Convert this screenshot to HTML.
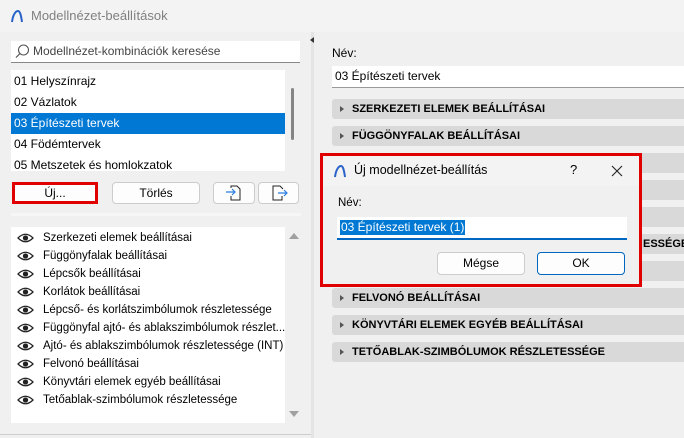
<!DOCTYPE html>
<html><head><meta charset="utf-8"><style>
*{box-sizing:border-box;margin:0;padding:0}
body{width:684px;height:438px;overflow:hidden;background:#f0f0f0;font-family:"Segoe UI","Liberation Sans",sans-serif;font-size:12px;color:#000;position:relative}
.a{position:absolute}
.title{left:0;top:0;width:684px;height:32px;background:#f3f3f3;color:#808080;font-size:13px}
.box{background:#fff}
.row{position:absolute;left:0;height:21px;line-height:21px;padding-left:3px;width:274px}
.btn{position:absolute;background:#fdfdfd;border:1px solid #ccc;border-radius:4px;text-align:center;line-height:20px}
.eye{position:absolute;left:5px;height:18px;line-height:18px;font-size:11.5px;white-space:nowrap}
.eye svg{vertical-align:middle;margin-right:9px;margin-left:1px}
.bar{position:absolute;left:332px;width:352px;height:20px;background:#d9d9d9;border-radius:3px 0 0 3px;font-weight:bold;font-size:11px;line-height:20px;padding-left:20px}
.bar:before{content:"";position:absolute;left:8px;top:7px;border-left:4px solid #555;border-top:3px solid transparent;border-bottom:3px solid transparent}
</style></head><body>
<div class="a title"><svg class="a" style="left:10px;top:9px" width="14" height="14" viewBox="0 0 14 14"><path d="M2 13 C3 5 6 2 8 2 C10 2 11 6 12 13" fill="none" stroke="#2a62c9" stroke-width="2"/></svg><span class="a" style="left:31px;top:8px">Modellnézet-beállítások</span></div>
<div class="a" style="left:311px;top:32px;width:3px;height:406px;background:#e4e4e4"></div>
<div class="a" style="left:310px;top:37px;border-right:4px solid #333;border-top:3px solid transparent;border-bottom:3px solid transparent"></div>
<div class="a box" style="left:11px;top:41px;width:289px;height:22px;border-bottom:1px solid #888"><svg class="a" style="left:4px;top:3px" width="15" height="15" viewBox="0 0 15 15"><circle cx="8.5" cy="6" r="5" fill="none" stroke="#555" stroke-width="1.1"/><path d="M5 9.5 L1 13.5" stroke="#555" stroke-width="1.2"/></svg><span class="a" style="left:22px;top:3px;color:#444">Modellnézet-kombinációk keresése</span></div>
<div class="a box" style="left:11px;top:70px;width:274px;height:101px;overflow:hidden">
<div class="row" style="top:1px">01 Helyszínrajz</div>
<div class="row" style="top:22px">02 Vázlatok</div>
<div class="row" style="top:43px;background:#0078d4;color:#fff">03 Építészeti tervek</div>
<div class="row" style="top:64px">04 Födémtervek</div>
<div class="row" style="top:85px">05 Metszetek és homlokzatok</div>
</div>
<div class="a" style="left:291px;top:88px;width:3px;height:52px;background:#858585;border-radius:2px"></div>
<div class="btn" style="left:12px;top:182px;width:86px;height:22px;border:3px solid #e00000;border-radius:0;line-height:16px">Új...</div>
<div class="btn" style="left:112px;top:182px;width:88px;height:22px">Törlés</div>
<div class="btn" style="left:213px;top:182px;width:42px;height:22px"><svg width="20" height="18" viewBox="0 0 20 18" style="margin-top:1px"><path d="M7 4 V2 H13 L16 5 V16 H7 V12" fill="none" stroke="#222"/><path d="M2 8 H11 M8 5 L11 8 L8 11" fill="none" stroke="#2a7de1" stroke-width="1.2"/></svg></div>
<div class="btn" style="left:258px;top:182px;width:41px;height:22px"><svg width="20" height="18" viewBox="0 0 20 18" style="margin-top:1px"><path d="M14 5 L11 2 H4 V16 H13 V12" fill="none" stroke="#222"/><path d="M9 9 H18 M15 6 L18 9 L15 12" fill="none" stroke="#2a7de1" stroke-width="1.2"/></svg></div>
<div class="a" style="left:11px;top:213px;width:290px;height:3px;background:#f6f6f6"></div>
<div class="a box" style="left:11px;top:227px;width:274px;height:196px">
<div class="eye" style="top:2px"><svg width="17" height="10" viewBox="0 0 20 12"><path d="M1 6 Q10 -3 19 6 Q10 15 1 6Z" fill="none" stroke="#222" stroke-width="1.5"/><circle cx="10" cy="6" r="3.2" fill="#222"/></svg>Szerkezeti elemek beállításai</div>
<div class="eye" style="top:20px"><svg width="17" height="10" viewBox="0 0 20 12"><path d="M1 6 Q10 -3 19 6 Q10 15 1 6Z" fill="none" stroke="#222" stroke-width="1.5"/><circle cx="10" cy="6" r="3.2" fill="#222"/></svg>Függönyfalak beállításai</div>
<div class="eye" style="top:38px"><svg width="17" height="10" viewBox="0 0 20 12"><path d="M1 6 Q10 -3 19 6 Q10 15 1 6Z" fill="none" stroke="#222" stroke-width="1.5"/><circle cx="10" cy="6" r="3.2" fill="#222"/></svg>Lépcsők beállításai</div>
<div class="eye" style="top:56px"><svg width="17" height="10" viewBox="0 0 20 12"><path d="M1 6 Q10 -3 19 6 Q10 15 1 6Z" fill="none" stroke="#222" stroke-width="1.5"/><circle cx="10" cy="6" r="3.2" fill="#222"/></svg>Korlátok beállításai</div>
<div class="eye" style="top:74px"><svg width="17" height="10" viewBox="0 0 20 12"><path d="M1 6 Q10 -3 19 6 Q10 15 1 6Z" fill="none" stroke="#222" stroke-width="1.5"/><circle cx="10" cy="6" r="3.2" fill="#222"/></svg>Lépcső- és korlátszimbólumok részletessége</div>
<div class="eye" style="top:92px"><svg width="17" height="10" viewBox="0 0 20 12"><path d="M1 6 Q10 -3 19 6 Q10 15 1 6Z" fill="none" stroke="#222" stroke-width="1.5"/><circle cx="10" cy="6" r="3.2" fill="#222"/></svg>Függönyfal ajtó- és ablakszimbólumok részlet...</div>
<div class="eye" style="top:110px"><svg width="17" height="10" viewBox="0 0 20 12"><path d="M1 6 Q10 -3 19 6 Q10 15 1 6Z" fill="none" stroke="#222" stroke-width="1.5"/><circle cx="10" cy="6" r="3.2" fill="#222"/></svg>Ajtó- és ablakszimbólumok részletessége (INT)</div>
<div class="eye" style="top:128px"><svg width="17" height="10" viewBox="0 0 20 12"><path d="M1 6 Q10 -3 19 6 Q10 15 1 6Z" fill="none" stroke="#222" stroke-width="1.5"/><circle cx="10" cy="6" r="3.2" fill="#222"/></svg>Felvonó beállításai</div>
<div class="eye" style="top:146px"><svg width="17" height="10" viewBox="0 0 20 12"><path d="M1 6 Q10 -3 19 6 Q10 15 1 6Z" fill="none" stroke="#222" stroke-width="1.5"/><circle cx="10" cy="6" r="3.2" fill="#222"/></svg>Könyvtári elemek egyéb beállításai</div>
<div class="eye" style="top:164px"><svg width="17" height="10" viewBox="0 0 20 12"><path d="M1 6 Q10 -3 19 6 Q10 15 1 6Z" fill="none" stroke="#222" stroke-width="1.5"/><circle cx="10" cy="6" r="3.2" fill="#222"/></svg>Tetőablak-szimbólumok részletessége</div>
</div>
<div class="a" style="left:289px;top:233px;border-bottom:6px solid #a0a0a0;border-left:5px solid transparent;border-right:5px solid transparent"></div>
<div class="a" style="left:289px;top:411px;border-top:6px solid #a0a0a0;border-left:5px solid transparent;border-right:5px solid transparent"></div>
<div class="a" style="left:0;top:434px;width:311px;height:1px;background:#ccc"></div>
<div class="a" style="left:332px;top:46px">Név:</div>
<div class="a box" style="left:332px;top:66px;width:352px;height:22px;border-bottom:1px solid #999;padding:3px 0 0 3px">03 Építészeti tervek</div>
<div class="bar" style="top:99px">SZERKEZETI ELEMEK BEÁLLÍTÁSAI</div>
<div class="bar" style="top:126px">FÜGGÖNYFALAK BEÁLLÍTÁSAI</div>
<div class="bar" style="top:153px"></div>
<div class="bar" style="top:180px"></div>
<div class="bar" style="top:207px"></div>
<div class="bar" style="top:234px;padding-left:311px">ESSÉGE</div>
<div class="bar" style="top:261px"></div>
<div class="bar" style="top:288px">FELVONÓ BEÁLLÍTÁSAI</div>
<div class="bar" style="top:315px">KÖNYVTÁRI ELEMEK EGYÉB BEÁLLÍTÁSAI</div>
<div class="bar" style="top:342px">TETŐABLAK-SZIMBÓLUMOK RÉSZLETESSÉGE</div>
<div class="a" style="left:320px;top:153px;width:322px;height:134px;border:3px solid #e00000;background:#f0f0f0">
<div class="a" style="left:0;top:0;width:316px;height:30px;background:#f3f3f3"></div>
<svg class="a" style="left:10px;top:8px" width="14" height="14" viewBox="0 0 14 14"><path d="M2 13 C3 5 6 2 8 2 C10 2 11 6 12 13" fill="none" stroke="#2a62c9" stroke-width="2"/></svg>
<span class="a" style="left:31px;top:7px;font-size:12.5px">Új modellnézet-beállítás</span>
<span class="a" style="left:247px;top:6px;font-size:13px">?</span>
<svg class="a" style="left:288px;top:9px" width="12" height="12" viewBox="0 0 12 12"><path d="M1 1 L11 11 M11 1 L1 11" stroke="#222" stroke-width="1.1"/></svg>
<span class="a" style="left:15px;top:41px;font-size:11.5px">Név:</span>
<div class="a box" style="left:14px;top:61px;width:290px;height:23px;border-bottom:2px solid #0067c0"><span style="position:absolute;left:3px;top:3px;background:#0078d4;color:#fff;line-height:15px;padding:0 1px">03 Építészeti tervek (1)</span></div>
<div class="btn" style="left:114px;top:96px;width:88px;height:23px">Mégse</div>
<div class="btn" style="left:214px;top:96px;width:88px;height:23px;border-color:#0067c0">OK</div>
</div>
</body></html>
